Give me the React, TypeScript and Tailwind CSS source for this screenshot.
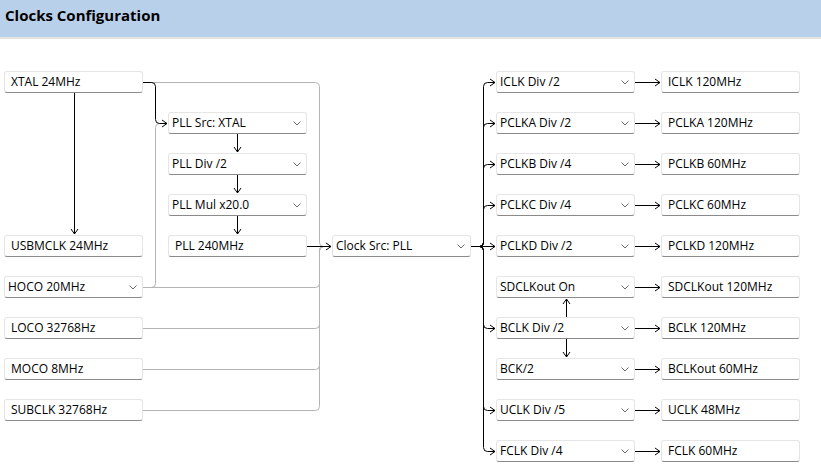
import React from 'react';

type Node = { label: string; x: number; y: number; combo?: boolean };

const W = 139;
const H = 22;

const rightRows = [
  { combo: 'ICLK Div /2', out: 'ICLK 120MHz', fed: true },
  { combo: 'PCLKA Div /2', out: 'PCLKA 120MHz', fed: true },
  { combo: 'PCLKB Div /4', out: 'PCLKB 60MHz', fed: true },
  { combo: 'PCLKC Div /4', out: 'PCLKC 60MHz', fed: true },
  { combo: 'PCLKD Div /2', out: 'PCLKD 120MHz', fed: true },
  { combo: 'SDCLKout On', out: 'SDCLKout 120MHz', fed: false },
  { combo: 'BCLK Div /2', out: 'BCLK 120MHz', fed: true },
  { combo: 'BCK/2', out: 'BCLKout 60MHz', fed: false },
  { combo: 'UCLK Div /5', out: 'UCLK 48MHz', fed: true },
  { combo: 'FCLK Div /4', out: 'FCLK 60MHz', fed: true },
];

const rowY = (i: number) => 71 + i * 41;

const nodes: Node[] = [
  { label: 'XTAL 24MHz', x: 4, y: 71 },
  { label: 'USBMCLK 24MHz', x: 4, y: 235 },
  { label: 'HOCO 20MHz', x: 4, y: 276, combo: true },
  { label: 'LOCO 32768Hz', x: 4, y: 317 },
  { label: 'MOCO 8MHz', x: 4, y: 358 },
  { label: 'SUBCLK 32768Hz', x: 4, y: 399 },
  { label: 'PLL Src: XTAL', x: 168, y: 112, combo: true },
  { label: 'PLL Div /2', x: 168, y: 153, combo: true },
  { label: 'PLL Mul x20.0', x: 168, y: 194, combo: true },
  { label: 'PLL 240MHz', x: 168, y: 235 },
  { label: 'Clock Src: PLL', x: 332, y: 235, combo: true },
  ...rightRows.map((r, i) => ({ label: r.combo, x: 496, y: rowY(i), combo: true })),
  ...rightRows.map((r, i) => ({ label: r.out, x: 661, y: rowY(i) })),
];

// open arrow head, tip at (x, y), pointing in direction d
function Head({ x, y, d }: { x: number; y: number; d: 'r' | 'u' | 'd' }) {
  let pts = '';
  if (d === 'r') pts = `${x - 5},${y - 3.5} ${x},${y} ${x - 5},${y + 3.5}`;
  if (d === 'd') pts = `${x - 3.5},${y - 5} ${x},${y} ${x + 3.5},${y - 5}`;
  if (d === 'u') pts = `${x - 3.5},${y + 5} ${x},${y} ${x + 3.5},${y + 5}`;
  return <polyline points={pts} fill="none" />;
}

function Box({ n }: { n: Node }) {
  return (
    <div
      className={`absolute flex items-center bg-white border border-[#e5e5e5] border-b-[#8a8a8a] rounded-[3px] text-[12px] text-black leading-none ${
        n.combo ? 'pl-[3px]' : 'pl-[6px]'
      }`}
      style={{ left: n.x, top: n.y - 39, width: W, height: H }}
    >
      <span className="flex-1 whitespace-nowrap">{n.label}</span>
      {n.combo && (
        <svg width="8" height="5" viewBox="0 0 8 5" className="mr-[5px] shrink-0">
          <polyline points="0.5,0.5 4,4 7.5,0.5" fill="none" stroke="#6a6a6a" strokeWidth="1" />
        </svg>
      )}
    </div>
  );
}

function gray(sy: number) {
  // source line into the clock src bus at x=319.5
  const c = 246.5;
  if (sy < c)
    return `M143 ${sy} H315.5 Q319.5 ${sy} 319.5 ${sy + 4} V${c - 4} Q319.5 ${c} 323.5 ${c} H331`;
  return `M143 ${sy} H315.5 Q319.5 ${sy} 319.5 ${sy - 4} V${c + 4} Q319.5 ${c} 323.5 ${c} H331`;
}

function bus(ty: number) {
  const c = 246.5;
  if (ty === c) return `M471 ${c} H495`;
  if (ty < c)
    return `M471 ${c} H479.5 Q483.5 ${c} 483.5 ${c - 4} V${ty + 4} Q483.5 ${ty} 487.5 ${ty} H495`;
  return `M471 ${c} H479.5 Q483.5 ${c} 483.5 ${c + 4} V${ty - 4} Q483.5 ${ty} 487.5 ${ty} H495`;
}

export default function App() {
  return (
    <div
      className="w-[821px] h-[471px] bg-white overflow-hidden flex flex-col"
      style={{ fontFamily: '"Open Sans", "Noto Sans", sans-serif' }}
    >
      <div className="h-[39px] shrink-0 bg-[#b9d0ea] border-b-2 border-[#e4e4e4] px-[5px] pt-[5px]">
        <h1 className="text-[15px] font-bold text-black leading-[20px]">Clocks Configuration</h1>
      </div>

      <div className="relative flex-1">
        <svg
          className="absolute inset-0"
          width="821"
          height="432"
          viewBox="0 39 821 432"
        >
          {/* inactive sources */}
          <g stroke="#b4b4b4" strokeWidth="1" fill="none">
            <path d={gray(82.5)} />
            <path d={gray(287.5)} />
            <path d={gray(328.5)} />
            <path d={gray(369.5)} />
            <path d={gray(410.5)} />
            <path d="M143 287.5 H151.5 Q155.5 287.5 155.5 283.5 V127.5 Q155.5 123.5 159.5 123.5 H167" />
          </g>

          {/* active path */}
          <g stroke="#000" strokeWidth="1" fill="none">
            <path d="M74.5 93 V234" />
            <Head x={74.5} y={234} d="d" />
            <path d="M143 82.5 H151.5 Q155.5 82.5 155.5 86.5 V119.5 Q155.5 123.5 159.5 123.5 H167" />
            <Head x={167} y={123.5} d="r" />

            <path d="M237.5 134 V152" />
            <Head x={237.5} y={152} d="d" />
            <path d="M237.5 175 V193" />
            <Head x={237.5} y={193} d="d" />
            <path d="M237.5 216 V234" />
            <Head x={237.5} y={234} d="d" />

            <path d="M307 246.5 H331" />
            <Head x={331} y={246.5} d="r" />

            {rightRows.map((r, i) => {
              const ty = rowY(i) + 11.5;
              return (
                <g key={i}>
                  {r.fed && <path d={bus(ty)} />}
                  {r.fed && <Head x={495} y={ty} d="r" />}
                  <path d={`M635 ${ty} H660`} />
                  <Head x={660} y={ty} d="r" />
                </g>
              );
            })}

            <path d="M566.5 317 V299" />
            <Head x={566.5} y={299} d="u" />
            <path d="M566.5 339 V357" />
            <Head x={566.5} y={357} d="d" />
          </g>
        </svg>

        {nodes.map((n, i) => (
          <Box key={i} n={n} />
        ))}
      </div>
    </div>
  );
}
